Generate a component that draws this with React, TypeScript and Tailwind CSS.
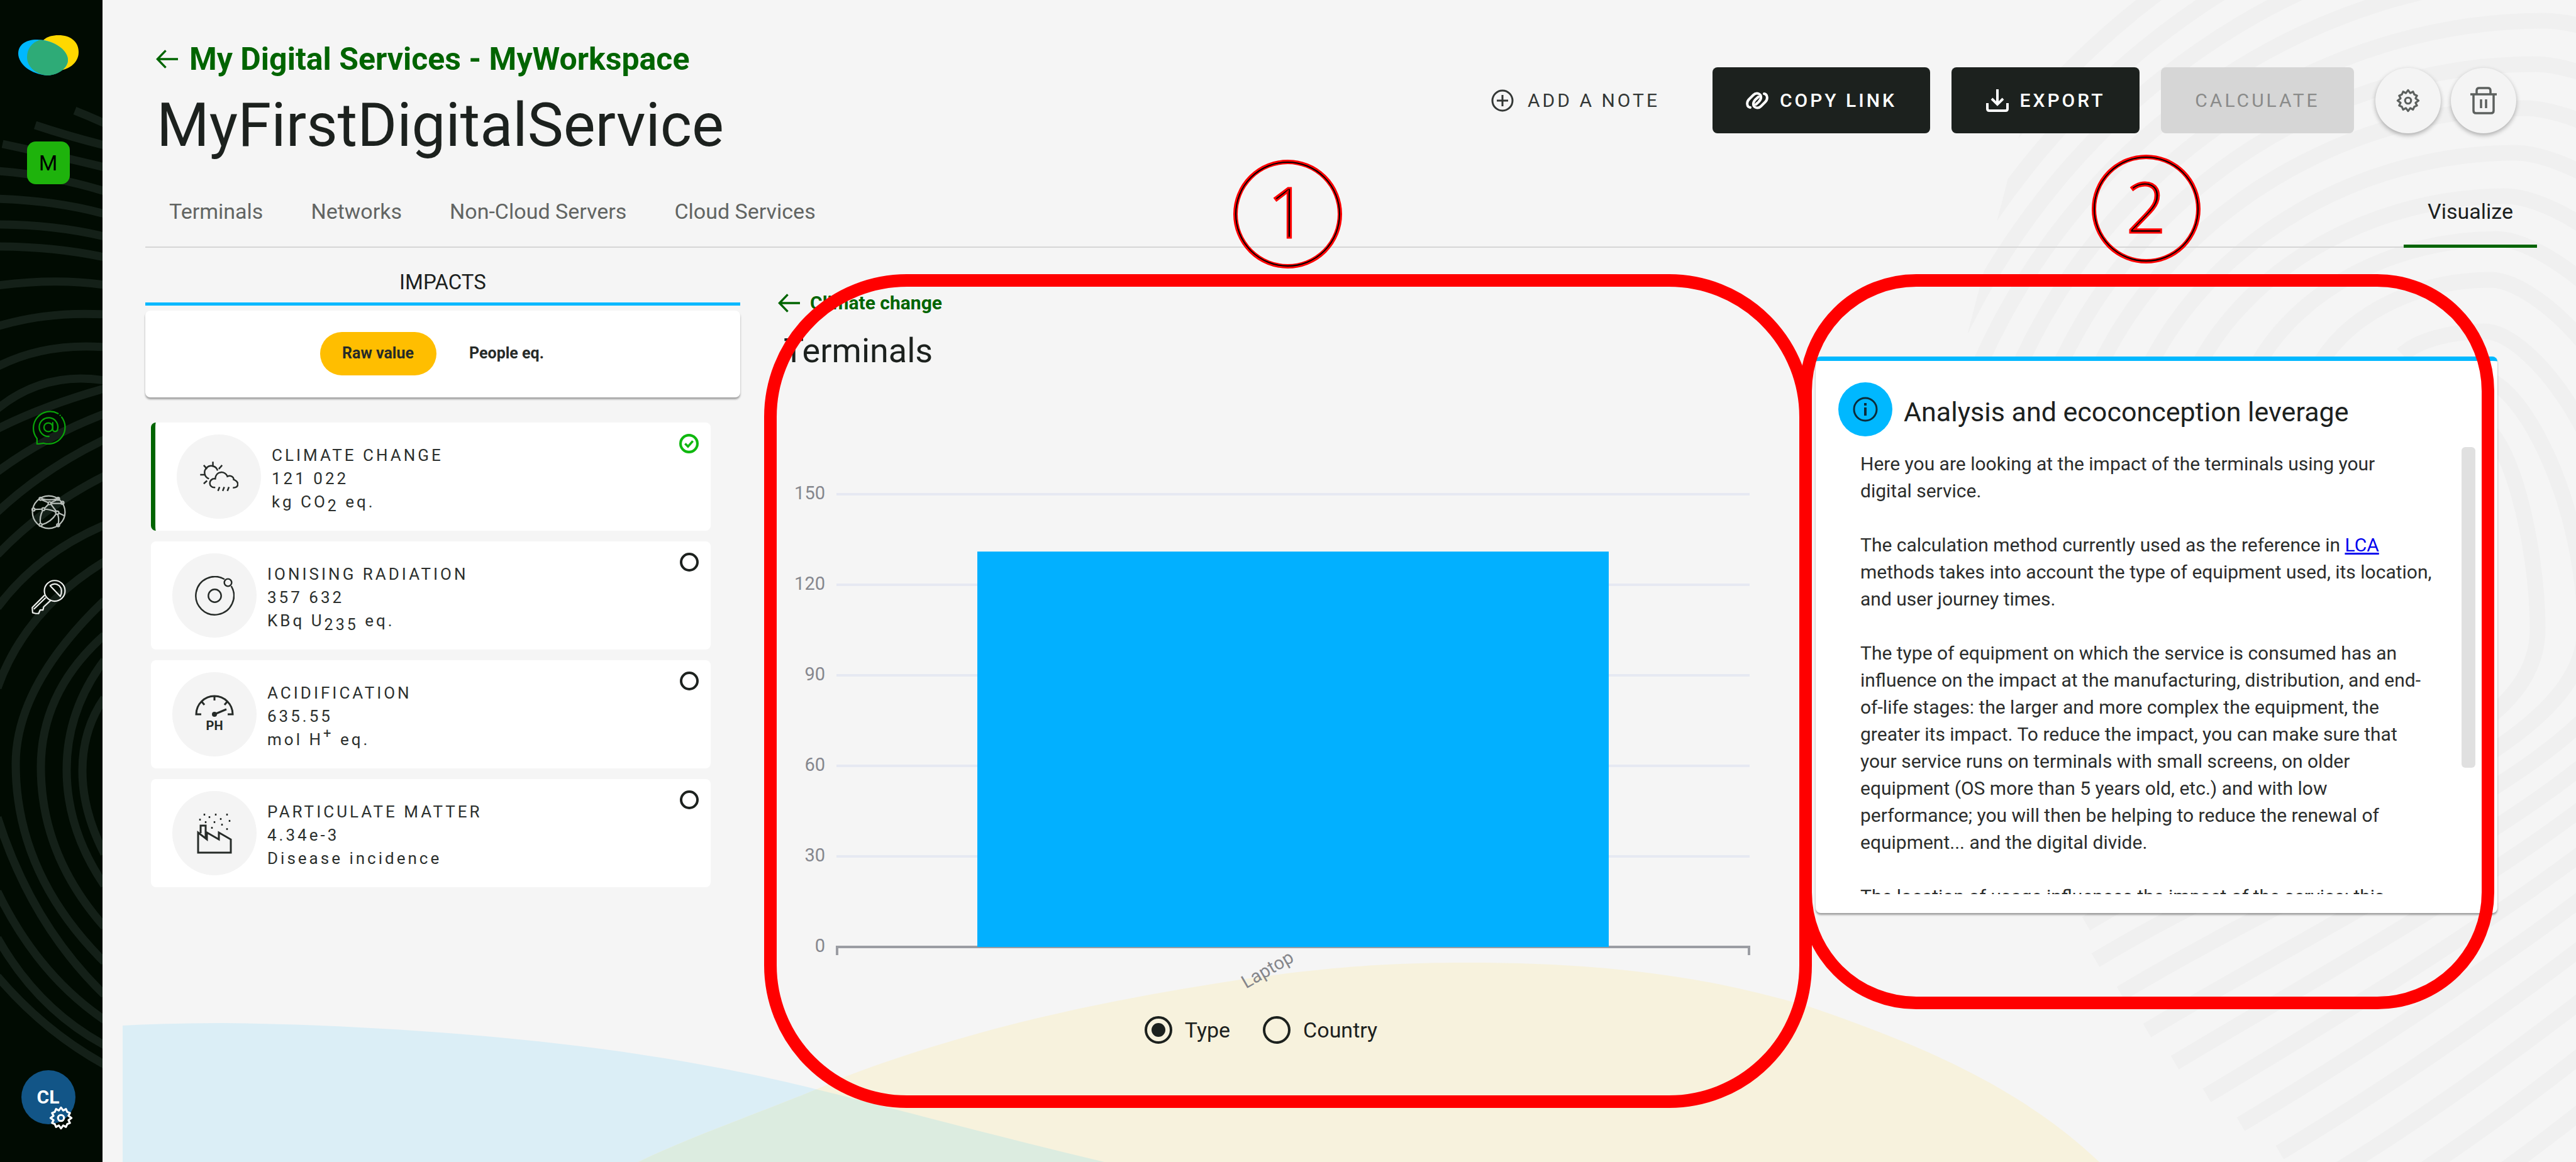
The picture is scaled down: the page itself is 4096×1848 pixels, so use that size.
import React from "react";

type IconProps = { className?: string };

/* ---------- icons ---------- */

function Logo({ className }: IconProps) {
  return (
    <svg viewBox="0 0 96 64" className={className} aria-hidden="true">
      <path d="M96 27C96 44 80 57 56 57C44 57 34 40 34 22C34 9 45 0 64 0C83 0 96 10 96 27Z" fill="#ffd800" />
      <path d="M0 29C0 15 12 7 30 7C52 7 76 20 79 38C80 50 66 63 46 64C20 62 0 46 0 29Z" fill="#00b8ff" />
      <path
        d="M34 7.500C55 9 77 21 79 38C80 50 66 63 47 64C28 63 14 50 14 35C14 22 21 12 34 7.500Z"
        fill="#2eab77"
      />
    </svg>
  );
}

function AtBubbleIcon({ className }: IconProps) {
  return (
    <svg viewBox="0 0 174 174" fill="none" stroke="#0aa40a" strokeWidth="7" strokeLinecap="round" className={className} aria-hidden="true">
      <path d="M152 36A84 84 0 0 1 60 167L28 172L28 144A84 84 0 0 1 134 18" />
      <path d="M144 27h1" />
      <circle cx="85" cy="87" r="22" />
      <path d="M107 64V100A13 13 0 0 0 132 96A47 47 0 1 0 88 133" />
    </svg>
  );
}

function GlobeIcon({ className }: IconProps) {
  return (
    <svg viewBox="0 0 174 174" fill="none" stroke="#b9bfba" strokeWidth="7" className={className} aria-hidden="true">
      <circle cx="87" cy="87" r="82" />
      <circle cx="46" cy="20" r="7" />
      <circle cx="134" cy="20" r="7" />
      <circle cx="156" cy="40" r="7" />
      <circle cx="10" cy="74" r="7" />
      <circle cx="60" cy="72" r="7" />
      <circle cx="91" cy="42" r="7" />
      <circle cx="130" cy="90" r="8" />
      <circle cx="46" cy="151" r="7" />
      <circle cx="134" cy="153" r="7" />
      <path d="M54 20Q90 30 127 20M52 25L85 39M128 25L97 39M150 43L98 43M86 47L66 67M97 46L126 84M17 73L53 72M67 72Q100 74 122 86M57 78Q40 110 45 144M124 96Q100 135 53 150M132 98Q140 120 135 146M138 92L168 106" />
    </svg>
  );
}

function KeyIcon({ className }: IconProps) {
  return (
    <svg viewBox="0 0 174 174" fill="none" stroke="#eef0ee" strokeWidth="7" strokeLinejoin="round" className={className} aria-hidden="true">
      <circle cx="117" cy="56" r="52" />
      <path d="M94 30Q118 12 140 30Q160 52 145 84Z" />
      <path d="M66 78L4 140L6 166L22 170L36 170L44 152L58 152L62 136L97 104" />
      <path d="M12 148L72 90" />
    </svg>
  );
}

function GearIcon({ className }: IconProps) {
  return (
    <svg viewBox="0 0 24 24" fill="none" stroke="currentColor" strokeWidth="2" strokeLinejoin="round" className={className} aria-hidden="true">
      <circle cx="12" cy="12" r="3" />
      <path d="M12 1.500L14.200 4.500L17 3L18.200 5.800L21 7L19.500 9.800L22.500 12L19.500 14.200L21 17L18.200 18.200L17 21L14.200 19.500L12 22.500L9.800 19.500L7 21L5.800 18.200L3 17L4.500 14.200L1.500 12L4.500 9.800L3 7L5.800 5.800L7 3L9.800 4.500Z" />
    </svg>
  );
}

function TrashIcon({ className }: IconProps) {
  return (
    <svg viewBox="0 0 42 44" fill="none" stroke="currentColor" strokeWidth="3.500" className={className} aria-hidden="true">
      <path d="M0 12H42M5 12V38Q5 42 9 42H33Q37 42 37 38V12M10 12V6Q10 2 14 2H28Q32 2 32 6V12M17 20V34M25 20V34" />
    </svg>
  );
}

function ArrowLeft({ className }: IconProps) {
  return (
    <svg viewBox="0 0 36 30" fill="none" stroke="currentColor" strokeWidth="3.500" className={className} aria-hidden="true">
      <path d="M36 15H3M16 1L2.500 15L16 29" />
    </svg>
  );
}

function PlusCircle({ className }: IconProps) {
  return (
    <svg viewBox="0 0 36 36" fill="none" stroke="currentColor" strokeWidth="3" className={className} aria-hidden="true">
      <circle cx="18" cy="18" r="16" />
      <path d="M18 9V27M9 18H27" />
    </svg>
  );
}

function LinkIcon({ className }: IconProps) {
  return (
    <svg viewBox="0 0 36 30" fill="none" stroke="currentColor" strokeWidth="4" strokeLinecap="round" className={className} aria-hidden="true">
      <path d="M7 26C1 25 1 17 5 13L12 6C17 1 25 4 24 11C23 16 19 18 16 21" />
      <path d="M29 4C35 5 35 13 31 17L24 24C19 29 11 26 12 19C13 14 17 12 20 9" />
    </svg>
  );
}

function DownloadIcon({ className }: IconProps) {
  return (
    <svg viewBox="0 0 36 36" fill="none" stroke="currentColor" strokeWidth="4" className={className} aria-hidden="true">
      <path d="M18 0V23M9 15L18 24L27 15M2 22V31Q2 34 5 34H31Q34 34 34 31V22" />
    </svg>
  );
}

function InfoIcon({ className }: IconProps) {
  return (
    <svg viewBox="0 0 40 40" fill="none" stroke="#0c2c3a" strokeWidth="3" className={className} aria-hidden="true">
      <circle cx="20" cy="20" r="18" />
      <path d="M20 17V30" strokeWidth="4" />
      <path d="M20 10V14" strokeWidth="4" />
    </svg>
  );
}

function WeatherIcon({ className }: IconProps) {
  return (
    <svg viewBox="0 0 196 154" fill="none" stroke="#262b28" strokeWidth="8" className={className} aria-hidden="true">
      <path d="M66 1V26M19 19L36 38M113 19L96 38M1 67H25M19 113L36 98" />
      <path d="M46 88A34 34 0 1 1 90 46" />
      <path d="M78 132C40 136 42 84 78 88C80 46 130 46 140 76C160 66 174 84 172 92C202 104 200 134 168 134" />
      <path d="M100 130L92 150M124 130L116 150M148 130L140 150" />
    </svg>
  );
}

function AtomIcon({ className }: IconProps) {
  return (
    <svg viewBox="0 0 204 204" fill="none" stroke="#262b28" strokeWidth="8" className={className} aria-hidden="true">
      <path d="M152 17A98 98 0 1 0 187 52" />
      <circle cx="102" cy="102" r="33" />
      <circle cx="170" cy="34" r="19" />
    </svg>
  );
}

function GaugeIcon({ className }: IconProps) {
  return (
    <svg viewBox="0 0 62 64" fill="none" stroke="#262b28" strokeWidth="3" className={className} aria-hidden="true">
      <path d="M10 32H2A29 29 0 0 1 60 32H52M31 2V10M10 11L15 17M52 11L47 17" />
      <path d="M31 32L50 24" />
      <circle cx="31" cy="32" r="4" fill="#262b28" stroke="none" />
      <text x="31" y="57" textAnchor="middle" fontSize="20" fontWeight="700" fill="#262b28" stroke="none" fontFamily="Roboto, sans-serif">
        PH
      </text>
    </svg>
  );
}

function FactoryIcon({ className }: IconProps) {
  return (
    <svg viewBox="0 0 56 66" fill="none" stroke="#262b28" strokeWidth="3" className={className} aria-hidden="true">
      <path d="M2 64V32L16 43V32L35 43V32L54 43V64ZM6 33V21H14V40" />
      <path
        d="M12 2v3M30 2v3M48 2v3M5 10v3M20 6v3M38 9v3M52 12v3M14 14v3M28 14v3M40 18v3M24 23v3M48 25v3"
        strokeWidth="2.500"
      />
    </svg>
  );
}

/* ---------- decoration ---------- */

const SIDEBAR_BANDS = [
  "M119 176Q142 185 166 196",
  "M56 199Q110 217 166 231",
  "M4 229Q80 245 166 266",
  "M-4 272Q80 278 166 304",
  "M-4 316Q90 319 166 340",
  "M-4 357Q85 357 166 376",
  "M-4 392Q85 392 166 409",
  "M-4 454Q88 442 166 453",
  "M-4 519Q75 495 166 500",
  "M-4 583Q70 545 166 552",
  "M-4 650Q70 590 166 605",
  "M-4 682Q70 645 166 618",
  "M-4 750Q70 695 166 658",
  "M-4 814Q70 745 166 699",
  "M-4 882Q70 805 166 757",
  "M-4 966Q60 880 166 835",
  "M-4 1094Q40 970 166 893",
  "M166 955Q25 1090 25 1215Q25 1390 166 1530",
  "M166 1010Q65 1100 65 1220Q65 1360 166 1474",
  "M166 1050Q106 1130 106 1224Q106 1320 166 1408",
  "M166 1110Q131 1160 131 1226Q131 1290 166 1358",
  "M-4 1300Q50 1470 166 1582",
  "M-4 1418Q60 1550 166 1622",
  "M-4 1492Q60 1605 166 1662",
  "M-4 1553Q70 1640 166 1693",
];

function SidebarPattern() {
  return (
    <svg
      viewBox="0 0 163 1848"
      preserveAspectRatio="none"
      className="absolute inset-0 h-full w-full"
      fill="none"
      stroke="#142018"
      strokeWidth="13"
      aria-hidden="true"
    >
      {SIDEBAR_BANDS.map((d) => (
        <path key={d} d={d} />
      ))}
    </svg>
  );
}

/* Each ring: crest point, left foot of the upper arc, tail end of the lower arc. */
const RINGS = [
  { crest: [3930, 670], foot: [3800, 760], tail: [3317, 1469] },
  { crest: [3940, 600], foot: [3800, 660], tail: [3332, 1527] },
  { crest: [3950, 527], foot: [3820, 564], tail: [3372, 1580] },
  { crest: [3960, 445], foot: [3691, 575], tail: [3414, 1639] },
  { crest: [3970, 380], foot: [3592, 575], tail: [3458, 1690] },
  { crest: [3985, 312], foot: [3499, 575], tail: [3509, 1742] },
  { crest: [4000, 243], foot: [3421, 575], tail: [3563, 1788] },
  { crest: [4015, 172], foot: [3342, 575], tail: [3625, 1833] },
  { crest: [4030, 102], foot: [3278, 575], tail: [3690, 1878] },
  { crest: [4045, 33], foot: [3214, 575], tail: [3755, 1923] },
  { crest: [4060, -37], foot: [3150, 575], tail: [3820, 1968] },
  { crest: [4075, -107], foot: [3095, 575], tail: [3885, 2013] },
  { crest: [4090, -177], foot: [3040, 575], tail: [3950, 2058] },
  { crest: [4105, -247], foot: [2985, 575], tail: [4015, 2103] },
];

function ringPath(i: number) {
  const { crest, foot, tail } = RINGS[i];
  const right = 4035 + 75 * i;
  const span = crest[0] - foot[0];
  const drop = foot[1] - crest[1];
  return [
    `M${foot[0]} ${foot[1]}`,
    `C${foot[0] + span * 0.18} ${foot[1] - drop * 0.6} ${crest[0] - span * 0.42} ${crest[1]} ${crest[0]} ${crest[1]}`,
    `C${crest[0] + 60 + 8 * i} ${crest[1]} ${right} ${crest[1] + 200} ${right} 1000`,
    `C${right} 1200 ${tail[0] + 350} ${tail[1] - 210} ${tail[0]} ${tail[1]}`,
  ].join("");
}

const BLUE_HILL = "M32 1631Q110 1627 190 1627C460 1630 780 1655 1029 1708C1160 1735 1330 1785 1593 1848H32Z";
const YELLOW_HILL =
  "M852 1848C950 1800 1090 1755 1179 1713C1400 1630 1600 1590 1815 1557C1960 1537 2050 1531 2170 1531C2400 1531 2560 1555 2717 1602C2900 1665 3050 1730 3175 1848Z";

function PageBackdrop() {
  return (
    <svg
      viewBox="0 0 3933 1848"
      preserveAspectRatio="none"
      className="absolute inset-0 h-full w-full"
      aria-hidden="true"
    >
      <defs>
        <clipPath id="ring-area">
          <path d="M3104 0H3933V1848H2966V529Z" />
        </clipPath>
        <clipPath id="hill">
          <path d={YELLOW_HILL} />
        </clipPath>
      </defs>
      <g clipPath="url(#ring-area)">
        <g transform="translate(-163 0)" fill="none" stroke="#f0f0f0" strokeWidth="25">
          {RINGS.map((r, i) => (
            <path key={r.crest[0]} d={ringPath(i)} />
          ))}
        </g>
      </g>
      <path d={BLUE_HILL} fill="#dbeef6" />
      <path d={YELLOW_HILL} fill="#f7f2dd" />
      <path d={BLUE_HILL} fill="#dcece0" clipPath="url(#hill)" />
    </svg>
  );
}

function Callout({ label, className }: { label: string; className: string }) {
  return (
    <div
      className={`absolute flex size-[173px] items-center justify-center rounded-full border-[7px] border-[#ff0000] pb-[12px] ${className}`}
    >
      <div className="absolute -inset-[4px] rounded-full border-2 border-black" />
      <span className="font-['Open_Sans',sans-serif] text-[110px] leading-none font-light text-black [-webkit-text-stroke:3px_#ff0000]">
        {label}
      </span>
    </div>
  );
}

/* ---------- sidebar ---------- */

function Sidebar() {
  return (
    <aside className="relative w-[163px] shrink-0 bg-[#010b02]">
      <SidebarPattern />
      <nav className="relative flex h-full flex-col items-center pt-[56px] pb-[60px]">
        <a href="#home" aria-label="Home" className="mr-[10px]">
          <Logo className="h-[64px] w-[96px]" />
        </a>
        <button
          type="button"
          className="mt-[105px] mr-[10px] size-[68px] rounded-[14px] bg-[#1eb30c] text-[34px] leading-none text-black"
        >
          M
        </button>
        <a href="#services" aria-label="Digital services" className="mt-[359px] mr-[8px]">
          <AtBubbleIcon className="size-[55px]" />
        </a>
        <a href="#systems" aria-label="Information systems" className="mt-[80px] mr-[8px]">
          <GlobeIcon className="size-[55px]" />
        </a>
        <a href="#administration" aria-label="Administration" className="mt-[80px] mr-[8px]">
          <KeyIcon className="size-[55px]" />
        </a>
        <button
          type="button"
          className="relative mt-auto mr-[10px] size-[86px] rounded-full bg-[#125587] text-[30px] leading-none font-bold text-white"
        >
          CL
          <GearIcon className="absolute top-[57px] left-[44px] size-[38px] text-white" />
        </button>
      </nav>
    </aside>
  );
}

/* ---------- header ---------- */

function Header() {
  return (
    <header className="flex items-start justify-between pt-[64px] pr-[33px]">
      <div>
        <a href="#workspace" className="flex items-center gap-[18px] pl-[17px] text-[#006400]">
          <ArrowLeft className="h-[30px] w-[35px]" />
          <span className="text-[50px] leading-[60px] font-bold">My Digital Services - MyWorkspace</span>
        </a>
        <h1 className="mt-[20px] pl-[18px] text-[96px] leading-[110px] text-[#1c211e]">MyFirstDigitalService</h1>
      </div>
      <div className="mt-[43px] flex items-center text-[30px] leading-none tracking-[4px]">
        <button type="button" className="mr-[84px] flex h-[105px] items-center gap-[22px] text-[#333735]">
          <PlusCircle className="size-[36px]" />
          ADD A NOTE
        </button>
        <button
          type="button"
          className="mr-[34px] flex h-[105px] w-[346px] items-center justify-center gap-[18px] rounded-[8px] bg-[#1c211e] font-medium text-white"
        >
          <LinkIcon className="h-[30px] w-[36px]" />
          COPY LINK
        </button>
        <button
          type="button"
          className="mr-[34px] flex h-[105px] w-[299px] items-center justify-center gap-[18px] rounded-[8px] bg-[#1c211e] font-medium text-white"
        >
          <DownloadIcon className="size-[36px]" />
          EXPORT
        </button>
        <button
          type="button"
          disabled
          className="mr-[34px] h-[105px] w-[307px] rounded-[8px] bg-[#d6d6d6] text-[#8a8b8a]"
        >
          CALCULATE
        </button>
        <button
          type="button"
          aria-label="Settings"
          className="mr-[16px] flex size-[104px] items-center justify-center rounded-full bg-[#f4f4f4] text-[#5c605e] shadow-[0_3px_7px_rgba(0,0,0,0.3)]"
        >
          <GearIcon className="size-[38px]" />
        </button>
        <button
          type="button"
          aria-label="Delete"
          className="flex size-[104px] items-center justify-center rounded-full bg-[#f4f4f4] text-[#5c605e] shadow-[0_3px_7px_rgba(0,0,0,0.3)]"
        >
          <TrashIcon className="h-[44px] w-[42px]" />
        </button>
      </div>
    </header>
  );
}

const TABS = ["Terminals", "Networks", "Non-Cloud Servers", "Cloud Services"];

function Tabs() {
  return (
    <nav className="mt-[62px] flex justify-between border-b-2 border-[#d6d6d6] pl-[38px] text-[34px] leading-[40px]">
      <div className="flex gap-[76px] pb-[36px]">
        {TABS.map((t) => (
          <a key={t} href={`#${t}`} className="text-[#626563]">
            {t}
          </a>
        ))}
      </div>
      <a
        href="#visualize"
        className="-mb-[2px] w-[212px] border-b-[5px] border-[#006400] text-center text-[#1c211e]"
      >
        Visualize
      </a>
    </nav>
  );
}

/* ---------- impacts ---------- */

type Impact = {
  title: string;
  value: string;
  unit: React.ReactNode;
  icon: React.ReactNode;
  active?: boolean;
};

const IMPACTS: Impact[] = [
  {
    title: "CLIMATE CHANGE",
    value: "121 022",
    unit: (
      <>
        kg CO<sub>2</sub> eq.
      </>
    ),
    icon: <WeatherIcon className="h-[48px] w-[61px]" />,
    active: true,
  },
  {
    title: "IONISING RADIATION",
    value: "357 632",
    unit: (
      <>
        KBq U<sub>235</sub> eq.
      </>
    ),
    icon: <AtomIcon className="size-[63px]" />,
  },
  {
    title: "ACIDIFICATION",
    value: "635.55",
    unit: (
      <>
        mol H<sup>+</sup> eq.
      </>
    ),
    icon: <GaugeIcon className="h-[64px] w-[62px]" />,
  },
  {
    title: "PARTICULATE MATTER",
    value: "4.34e-3",
    unit: "Disease incidence",
    icon: <FactoryIcon className="h-[66px] w-[56px]" />,
  },
];

function ImpactCard({ title, value, unit, icon, active }: Impact) {
  return (
    <button
      type="button"
      aria-pressed={!!active}
      className={`relative flex h-[172px] w-full items-center gap-[17px] rounded-[8px] bg-white pl-[34px] text-left ${
        active ? "border-l-[7px] border-[#006400]" : ""
      }`}
    >
      <span className="flex size-[134px] items-center justify-center rounded-full bg-[#f4f4f4]">{icon}</span>
      <span className="flex flex-col pt-[7px] text-[26px] leading-[37px] tracking-[4px] text-[#2b2f2d] [&_sub]:text-[25px] [&_sup]:text-[22px]">
        <span>{title}</span>
        <span>{value}</span>
        <span>{unit}</span>
      </span>
      {active ? (
        <svg viewBox="0 0 30 30" className="absolute top-[18px] right-[19px] size-[31px]" fill="none" stroke="#0fb80f" strokeWidth="4" aria-hidden="true">
          <circle cx="15" cy="15" r="13" />
          <path d="M9 15L13.500 19.500L21 11" strokeWidth="3.500" />
        </svg>
      ) : (
        <span className="absolute top-[18px] right-[19px] size-[30px] rounded-full border-4 border-[#1c211e]" />
      )}
    </button>
  );
}

function Impacts() {
  return (
    <section className="pt-[35px]">
      <h2 className="border-b-[5px] border-[#00b8ff] pb-[12px] text-center text-[33px] leading-[40px] text-[#1c211e]">
        IMPACTS
      </h2>
      <div className="mt-[8px] flex h-[138px] items-center justify-center rounded-[8px] bg-white pb-[2px] pl-[18px] text-[25px] font-bold text-[#262a28] shadow-[0_3px_3px_rgba(0,0,0,0.35)]">
        <button type="button" className="h-[69px] w-[185px] rounded-full bg-[#ffbe00]">
          Raw value
        </button>
        <button type="button" className="h-[69px] w-[224px]">
          People eq.
        </button>
      </div>
      <div className="mt-[40px] mr-[47px] ml-[9px] flex flex-col gap-[17px]">
        {IMPACTS.map((i) => (
          <ImpactCard key={i.title} {...i} />
        ))}
      </div>
    </section>
  );
}

/* ---------- chart ---------- */

const MAX_TICK = 150;
const TICKS = [150, 120, 90, 60, 30, 0];
const BASE_Y = 888;
const TOP_Y = 168;
const yFor = (v: number) => BASE_Y - (v / MAX_TICK) * (BASE_Y - TOP_Y);

function BarChart() {
  return (
    <svg viewBox="0 0 1590 976" className="mt-[28px] w-full" fontFamily="Roboto, sans-serif" role="img" aria-label="Impact of terminals by type">
      {TICKS.map((t) => (
        <g key={t}>
          <text x="75" y={yFor(t) + 8} textAnchor="end" fontSize="29" fill="#85878e">
            {t}
          </text>
          {t > 0 && <path d={`M93 ${yFor(t)}H1545`} stroke="#e6e9f2" strokeWidth="4" />}
        </g>
      ))}
      <path d="M94 901V888H1544V901" fill="none" stroke="#9b9da3" strokeWidth="4" />
      <rect x="317" y={yFor(131)} width="1004" height={BASE_Y - yFor(131)} fill="#02b0ff" />
      <text x="822" y="910" textAnchor="end" fontSize="29" fill="#85868b" transform="rotate(-30 822 910)">
        Laptop
      </text>
    </svg>
  );
}

function ChartSection() {
  return (
    <section className="relative pt-[70px]">
      <a href="#climate" className="flex items-center gap-[16px] text-[#006400]">
        <ArrowLeft className="h-[30px] w-[35px]" />
        <span className="text-[30px] leading-[36px] font-bold">Climate change</span>
      </a>
      <h2 className="mt-[26px] pl-[9px] text-[54px] leading-[64px] text-[#1c211e]">Terminals</h2>
      <BarChart />
      <fieldset className="mt-[22px] mr-[54px] flex justify-center gap-[52px] text-[34px] leading-[44px] text-[#1c211e]">
        <label className="flex items-center gap-[20px]">
          <input
            type="radio"
            name="group-by"
            defaultChecked
            className="size-[44px] appearance-none rounded-full border-4 border-[#1c211e] bg-clip-content p-[7px] checked:bg-[#1c211e]"
          />
          Type
        </label>
        <label className="flex items-center gap-[20px]">
          <input
            type="radio"
            name="group-by"
            className="size-[44px] appearance-none rounded-full border-4 border-[#1c211e] bg-clip-content p-[7px] checked:bg-[#1c211e]"
          />
          Country
        </label>
      </fieldset>
      <div className="pointer-events-none absolute top-[42px] -right-[54px] -left-[22px] h-[1326px] rounded-[227px] border-[20px] border-[#ff0000]" />
      <Callout label="1" className="-top-[140px] left-[724px]" />
    </section>
  );
}

/* ---------- analysis ---------- */

function Analysis() {
  return (
    <section className="relative pt-[173px]">
      <div className="h-[885px] rounded-[8px] border-t-[7px] border-[#00b8ff] bg-white pt-[34px] shadow-[0_3px_3px_rgba(0,0,0,0.35)]">
        <div className="flex items-start gap-[18px] pl-[36px]">
          <span className="flex size-[86px] items-center justify-center rounded-full bg-[#00b8ff]">
            <InfoIcon className="size-[40px]" />
          </span>
          <h2 className="mt-[23px] text-[43px] leading-[48px] text-[#1c211e]">Analysis and ecoconception leverage</h2>
        </div>
        <div className="mt-[17px] mr-[35px] flex h-[711px] items-start justify-between overflow-hidden pl-[71px]">
          <div className="w-[918px] text-[30px] leading-[43px] text-[#2b2d2c]">
            <p className="mt-[5px]">
              Here you are looking at the impact of the terminals using your
              <br />
              digital service.
            </p>
            <p className="mt-[43px]">
              The calculation method currently used as the reference in{" "}
              <a href="#lca" className="text-[#0000ee] underline">
                LCA
              </a>{" "}
              methods takes into account the type of equipment used, its location, and user journey times.
            </p>
            <p className="mt-[43px]">
              The type of equipment on which the service is consumed has an influence on the impact at the
              manufacturing, distribution, and end-of-life stages: the larger and more complex the equipment, the
              greater its impact. To reduce the impact, you can make sure that your service runs on terminals with
              small screens, on older equipment (OS more than 5 years old, etc.) and with low performance; you will
              then be helping to reduce the renewal of equipment... and the digital divide.
            </p>
            <p className="mt-[43px]">The location of usage influences the impact of the service: this</p>
          </div>
          <div className="h-[510px] w-[22px] rounded-[6px] bg-[#e0e0e0]" />
        </div>
      </div>
      <div className="pointer-events-none absolute top-[42px] -left-[26px] h-[1169px] w-[1105px] rounded-[186px] border-[20px] border-[#ff0000]" />
      <Callout label="2" className="-top-[148px] left-[439px]" />
    </section>
  );
}

export default function App() {
  return (
    <div className="flex min-h-screen overflow-hidden bg-[#f5f5f5] font-['Roboto',sans-serif]">
      <Sidebar />
      <div className="relative min-w-0 flex-1">
        <PageBackdrop />
        <main className="relative pr-[62px] pl-[68px]">
          <Header />
          <Tabs />
          <div className="grid grid-cols-[946fr_1590fr_1084fr] gap-[60px] pr-[63px]">
            <Impacts />
            <ChartSection />
            <Analysis />
          </div>
        </main>
      </div>
    </div>
  );
}
